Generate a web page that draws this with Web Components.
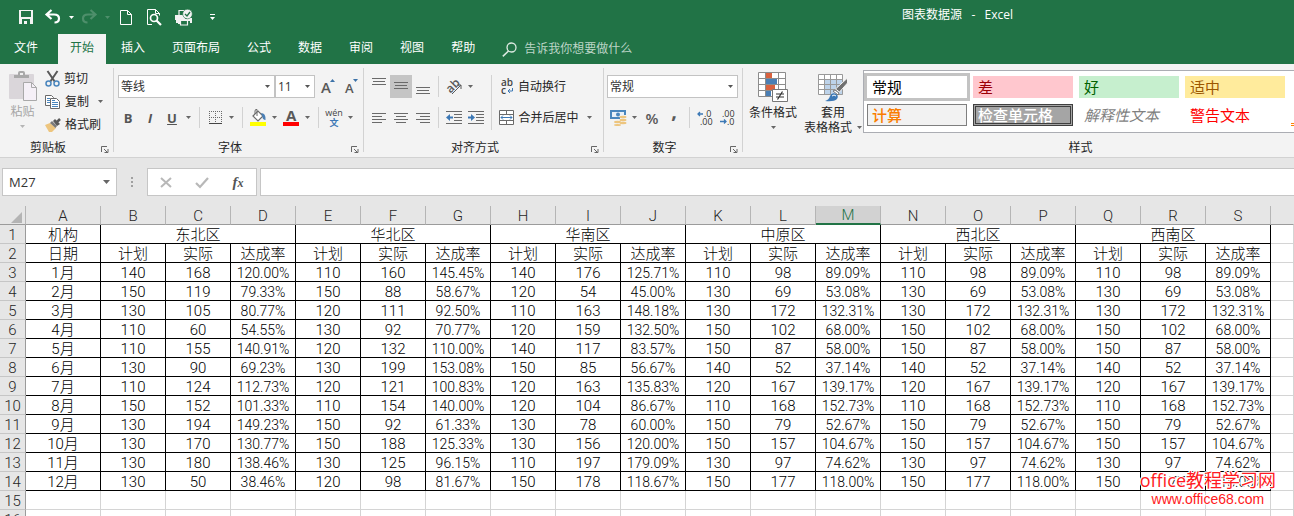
<!DOCTYPE html>
<html lang="zh-CN">
<head>
<meta charset="utf-8">
<title>图表数据源 - Excel</title>
<style>
  html, body { margin: 0; height: 100%; overflow: hidden; }
  body {
    font: 12px/16px "Open Sans", "Noto Sans CJK SC", sans-serif;
    color: #262626;
    background: #e6e6e6;
  }
</style>
</head>
<body>
<excel-window></excel-window>
<script>
const define = (tag, css, html, setup) => {
  const template = document.createElement('template');
  template.innerHTML = `<style>:host{display:block;box-sizing:border-box}*{box-sizing:border-box}button{font:inherit;color:inherit;background:none;border:0;padding:0;margin:0}${css}</style>${html}`;
  customElements.define(tag, class extends HTMLElement {
    connectedCallback() {
      if (this.shadowRoot) return;
      const root = this.attachShadow({ mode: 'open' });
      root.append(template.content.cloneNode(true));
      if (setup) setup(this, root);
    }
  });
};

/* Icon set: [width, height, markup] */
const lines = (list) => `<path d="${list.map(([x, y, w]) => `M${x} ${y}h${w}v1h-${w}z`).join('')}" fill="#6a6a6a" shape-rendering="crispEdges"/>`;
const ICONS = {
  caret: [5, 3, '<path d="M0 0h5L2.500 3z" fill="currentColor"/>'],
  customize: [5, 6, '<path d="M0 0h5v1H0zM0 3h5L2.500 6z" fill="#fff"/>'],
  save: [14, 14, '<path fill="#f3f3f3" fill-rule="evenodd" d="M0 0h14v14H0zM2 1v6h10v-6zM3 9v5h8V9z"/><path fill="#f3f3f3" d="M5 11h3v3h-3z"/>'],
  undo: [16, 14, '<path d="M6.500 0 1.500 4.500l5 4.500M2 4.500h7c3 0 5 1.500 5 4s-2 4-4.500 4" fill="none" stroke="#fff" stroke-width="2.200"/>'],
  redo: [16, 14, '<path d="M9.500 0l5 4.500-5 4.500M14 4.500H7C4 4.500 2 6 2 8.500s2 4 4.500 4" fill="none" stroke="#4e8f6b" stroke-width="2.200"/>'],
  newdoc: [12, 15, '<path d="M.5.5h7l4 4v10H.5zM7.500.5v4h4" fill="none" stroke="#fff"/>'],
  preview: [15, 16, '<path d="M5 15.500H.5V.5h8l4 4v2M8.500.5v4h4" fill="none" stroke="#fff"/><circle cx="7" cy="9" r="3.500" fill="none" stroke="#fff" stroke-width="1.700"/><path d="M9.500 11.500l4.500 4.500" stroke="#fff" stroke-width="2.200"/>'],
  print: [18, 17, '<path d="M1 8h2v2h9V9h5v5h-2v-2H5v3H3v-1H1z" fill="#f3f3f3"/><path d="M4 7.500v-6h6M5.500 11.500h7v4.500h-7z" fill="#217346" stroke="#f3f3f3" stroke-width="1.200"/><path d="M0 6h10v5H0z" fill="#f3f3f3"/><circle cx="12.500" cy="5" r="4.800" fill="#f3f3f3" stroke="#217346" stroke-width=".6"/><path d="M10 5l2 2 3-4" fill="none" stroke="#217346" stroke-width="1.300"/>'],
  search: [15, 15, '<circle cx="9.500" cy="5.500" r="4.500" fill="none" stroke="#dce9e1" stroke-width="1.300"/><path d="M6.500 9 .8 14.300" stroke="#dce9e1" stroke-width="1.600"/>'],
  paste: [28, 31, '<path d="M1 3h23q1 0 1 1v23q0 1-1 1H1q-1 0-1-1V4q0-1 1-1z" fill="#dad6da"/><path d="M5 7V4h4V2q0-2 2-2h3q2 0 2 2v2h4v3z" fill="#a9a9a9"/><path d="M11 2h3v2h-3z" fill="#f0f0f0"/><path d="M14.500 11.500h8l5 5v13h-13z" fill="#f5f0f7" stroke="#a9a9a9"/><path d="M22.500 11.500v5h5" fill="none" stroke="#a9a9a9"/>'],
  cut: [15, 16, '<path d="M2.500 0 10 11M12.500 0 5 11" stroke="#595959" stroke-width="2"/><circle cx="3.500" cy="12.500" r="2.500" fill="none" stroke="#4a86bd" stroke-width="1.500"/><circle cx="11.500" cy="12.500" r="2.500" fill="none" stroke="#4a86bd" stroke-width="1.500"/>'],
  copy: [16, 14, '<path d="M.5.5h6l2 2v8h-8z" fill="#fff" stroke="#6a6a6a"/><path d="M2 3.500h3M2 5.500h3M2 7.500h3" stroke="#4a86bd"/><path d="M5.500 3.500h6l3 3v7h-9z" fill="#fff" stroke="#6a6a6a"/><path d="M7 7.500h6M7 9.500h6M7 11.500h6M7 5.500h3" stroke="#4a86bd"/>'],
  brush: [16, 14, '<path d="M0 7 5 5l6 5-4 4H4z" fill="#edc57e"/><path d="m5 5 2-2 5 5-1.500 2z" fill="#7a7a7a"/><path d="m8 3 2-2 5 5-3 2z" fill="#595959"/><path d="m12 4 3-3" stroke="#595959" stroke-width="2.500"/>'],
  border: [13, 13, '<path d="M.5 0v12M6.500 0v12M12.500 0v12M0 .5h13M0 6.500h13" stroke="#6a6a6a" stroke-dasharray="1 1" fill="none" shape-rendering="crispEdges"/><path d="M0 12.500h13" stroke="#444"/>'],
  fill: [16, 17, '<path d="m3 7 5-5 5 5-5 5z" fill="#fff" stroke="#6a6a6a" stroke-width="1.200"/><path d="M5 5V2q0-2 2-1.500V7" fill="none" stroke="#6a6a6a"/><path d="M11 4q5 0 4.500 7-3-.5-3-3z" fill="#4a7fb5"/><path d="M0 13h16v4H0z" fill="#ff0"/>'],
  grow: [14, 18, '<text x="0" y="15" font-size="15" font-weight="600" fill="#595959">A</text><path d="M9 4 11.500 1 14 4z" fill="#3c72a8"/>'],
  shrink: [13, 18, '<text x="0" y="15" font-size="13" font-weight="600" fill="#595959">A</text><path d="M8 1h5l-2.500 3z" fill="#3c72a8"/>'],
  fontcolor: [16, 17, '<text x="3" y="12" font-size="15" font-weight="700" fill="#595959">A</text><path d="M0 13h16v4H0z" fill="#f00"/>'],
  pinyin: [18, 18, '<text x="9" y="7" text-anchor="middle" font-size="9" fill="#444">wén</text><text x="9" y="17" text-anchor="middle" font-size="9" font-weight="700" fill="#3c78b5">文</text>'],
  top: [14, 23, lines([[0,3,14],[1,6,12],[0,9,14]])],
  middle: [14, 23, lines([[0,7,14],[1,10,12],[0,13,14]])],
  bottom: [14, 23, lines([[0,12,14],[1,15,12],[0,18,14]])],
  left: [14, 10, lines([[0,0,14],[0,3,10],[0,6,14],[0,9,10]])],
  center: [14, 10, lines([[0,0,14],[2,3,10],[0,6,14],[2,9,10]])],
  right: [14, 10, lines([[0,0,14],[4,3,10],[0,6,14],[4,9,10]])],
  orient: [17, 16, '<text x="1" y="12" font-size="12" font-weight="600" fill="#595959" transform="rotate(-45 6 9)">ab</text><path d="M6 15 15 6M11 6h4v4" fill="none" stroke="#595959"/>'],
  outdent: [16, 13, lines([[0,0,16],[8,3,8],[8,6,8],[8,9,8],[0,12,16]]) + '<path d="M0 6.500 4 3v2.500h3v2H4V10z" fill="#3c78b5"/>'],
  indent: [16, 13, lines([[0,0,16],[8,3,8],[8,6,8],[8,9,8],[0,12,16]]) + '<path d="M7 6.500 3 3v2.500H0v2h3V10z" fill="#3c78b5"/>'],
  wrap: [13, 16, '<text x="0" y="7" font-size="10" font-weight="600" fill="#444">ab</text><text x="0" y="15" font-size="10" font-weight="600" fill="#444">c</text><path d="M11.500 9v3H7M9 10l-2 2 2 2" fill="none" stroke="#3c78b5"/>'],
  merge: [15, 15, '<path d="M.5.5h14v14H.5zM.5 4.500h14M.5 10.500h14M7.500.5v4M7.500 10.500v4" fill="#fff" stroke="#6a6a6a"/><path d="M2 7.500h11M4 5.500l-2 2 2 2M11 5.500l2 2-2 2" fill="none" stroke="#3c78b5"/>'],
  money: [17, 16, '<path d="M0 0h16v9H0z" fill="#4a86bd"/><path d="M2 2h12v5H2z" fill="#e8f0f8"/><circle cx="8" cy="4.500" r="2" fill="#4a86bd"/><path d="M10 5h6v10h-6zM4 10h6v6H4z" fill="#f3f3f3"/><g fill="#edc57e"><ellipse cx="13" cy="7" rx="3.500" ry="1.200"/><ellipse cx="13" cy="10" rx="3.500" ry="1.200"/><ellipse cx="13" cy="13" rx="3.500" ry="1.200"/><ellipse cx="7.500" cy="12" rx="3.500" ry="1.200"/><ellipse cx="7.500" cy="15" rx="3.500" ry="1"/></g>'],
  incdec: [16, 16, '<text x="7" y="7" font-size="9" fill="#333">.0</text><text x="3" y="15" font-size="9" fill="#333">.00</text><path d="M6 4H1M3 2 1 4l2 2" fill="none" stroke="#3c78b5" stroke-width="1.300"/>'],
  decdec: [16, 16, '<text x="3" y="7" font-size="9" fill="#333">.00</text><text x="8" y="15" font-size="9" fill="#333">.0</text><path d="M1 11.500h6M5 9.500l2 2-2 2" fill="none" stroke="#3c78b5" stroke-width="1.300"/>'],
  launcher: [8, 7, '<path d="M.5 6V.5H6M3 3l3 3M7 3v3.500H3.500" fill="none" stroke="#666"/>'],
  condition: [31, 30, '<path d="M.5.5h27v24H.5z" fill="#fff"/><path d="M8 1h6v5H8zM8 13h9v5H8z" fill="#d9623f"/><path d="M8 7h11v5H8zM8 19h5v5H8z" fill="#4a7fb5"/><path d="M.5.5h27v24H.5zM.5 6.500h27M.5 12.500h27M.5 18.500h27M7.500.5v24M20.500.5v24" fill="none" stroke="#8c8c8c"/><path d="M14.500 17.500h15v12h-15z" fill="#fff" stroke="#777"/><path d="M18 22h8M18 25h8M24.500 19.500l-5 8" fill="none" stroke="#333" stroke-width="1.200"/>'],
  tableformat: [30, 30, '<g transform="translate(0 2)"><path d="M.5.5h24v20H.5z" fill="#fff"/><path d="M7 6h18v15H7z" fill="#bdd3ea"/><path d="M.5.5h24v20H.5zM.5 5.500h24M.5 10.500h24M.5 15.500h24M6.500.5v20M12.500.5v20M18.500.5v20" fill="none" stroke="#999"/><path d="M29.500 4v5l-8 9-4-3z" fill="#707070" stroke="#f3f3f3"/><path d="m17 16 4 3-1 2-5-4z" fill="#fff" stroke="#777"/><path d="M7 27q4-1 5-5 2-4 6-2 3 2 1 5-3 3-12 2z" fill="#3c78b5"/><path d="M14 22q2-2 4 0" fill="none" stroke="#fff"/></g>'],
  cancel: [12, 11, '<path d="M1 1l10 9M11 1 1 10" stroke="#b8b8b8" stroke-width="2"/>'],
  accept: [14, 11, '<path d="M1 6l4 4 8-9" fill="none" stroke="#b8b8b8" stroke-width="2.200"/>'],
  dots: [2, 10, '<path d="M0 0h2v2H0zM0 4h2v2H0zM0 8h2v2H0z" fill="#a0a0a0"/>'],
  corner: [11, 11, '<path d="M11 0v11H0z" fill="#b4b4b4"/>']
};

define('ui-icon', `:host{display:block;flex:none}svg{display:block;overflow:visible}`, '', (host, root) => {
  const [w, h, body] = ICONS[host.getAttribute('name')];
  root.innerHTML += `<svg width="${w}" height="${h}" viewBox="0 0 ${w} ${h}" aria-hidden="true">${body}</svg>`;
});

/* A small ribbon button, with an optional drop-down caret */
define('tool-button', `
  :host{display:flex;flex:none;height:var(--h,23px)}
  button{display:flex;align-items:center;justify-content:center;height:100%}
  .main{min-width:var(--w,22px);gap:4px;white-space:nowrap}
  .drop{width:var(--drop,11px);color:#666}
  :host(:not([caret])) .drop{display:none}
  :host([pressed]) .main{background:#c5c5c5}
  :host([dim]) .drop{color:#4e8f6b}
  :host([light]) .drop{color:#fff}`,
  `<button class="main"><slot></slot></button><button class="drop" aria-label="更多选项"><ui-icon name="caret"></ui-icon></button>`,
  (host, root) => {
    const main = root.querySelector('.main');
    if (host.hasAttribute('label')) main.setAttribute('aria-label', host.getAttribute('label'));
    if (host.hasAttribute('icon')) {
      const icon = document.createElement('ui-icon');
      icon.setAttribute('name', host.getAttribute('icon'));
      main.prepend(icon);
    }
  });

define('large-button', `
  button{display:flex;flex-direction:column;align-items:center;width:100%}
  .art{height:33px;display:flex;align-items:flex-start;justify-content:center}
  .text{line-height:15px;white-space:nowrap}
  .more{height:14px;display:flex;align-items:center;color:#666}
  :host([disabled]) button{color:#a6a6a6}:host([disabled]) .more{color:#b5b5b5}
  .two{display:flex;align-items:center;gap:5px;line-height:15px;white-space:nowrap;color:#666}
  .two b{font-weight:400;color:#262626}`,
  `<button><span class="art"></span><span class="text"><slot></slot></span><span class="more"><ui-icon name="caret"></ui-icon></span></button>`,
  (host, root) => {
    root.querySelector('.art').innerHTML = `<ui-icon name="${host.getAttribute('icon')}"></ui-icon>`;
    if (host.hasAttribute('second')) {
      const more = root.querySelector('.more');
      more.className = 'two';
      more.insertAdjacentHTML('afterbegin', `<b>${host.getAttribute('second')}</b>`);
    }
  });

define('combo-box', `
  :host{position:relative;height:23px;flex:none}
  select{appearance:none;width:100%;height:100%;border:1px solid #c3c3c3;border-radius:0;background:#fff;font:inherit;color:#333;padding:0 2px;margin:0;display:block}
  ui-icon{position:absolute;right:5px;top:10px;color:#555;pointer-events:none}`,
  `<select></select><ui-icon name="caret"></ui-icon>`,
  (host, root) => {
    const select = root.querySelector('select');
    select.add(new Option(host.getAttribute('value')));
    select.setAttribute('aria-label', host.getAttribute('label'));
  });

define('ribbon-group', `
  :host{display:flex;flex-direction:column;flex:none;position:relative}
  :host::after{content:"";position:absolute;right:0;top:4px;bottom:5px;width:1px;background:#d2d2d2}
  :host([open])::after{display:none}
  .body{flex:1;min-height:0}
  footer{display:flex;height:18px;line-height:18px;flex:none}
  .name{flex:1;text-align:center;padding-left:var(--label-shift,0)}
  button{width:18px;display:flex;align-items:center;justify-content:center;padding-top:2px}
  :host([open]) button{display:none}`,
  `<div class="body"><slot></slot></div><footer><span class="name"></span><button aria-label="对话框启动器"><ui-icon name="launcher"></ui-icon></button></footer>`,
  (host, root) => { root.querySelector('.name').textContent = host.getAttribute('name'); });

define('title-bar', `
  :host{display:flex;align-items:center;height:34px;background:#217346;color:#fff}
  nav{display:flex;padding-left:11px;width:48%;flex:none}
  h1{flex:1;text-align:center;font:inherit;margin:0;white-space:pre;padding-bottom:4px}`,
  `<nav aria-label="快速访问工具栏">
    <tool-button icon="save" label="保存" style="--w:30px"></tool-button>
    <tool-button icon="undo" label="撤消" caret light style="--w:24px;--drop:12px"></tool-button>
    <tool-button icon="redo" label="恢复" caret dim style="--w:24px;--drop:12px"></tool-button>
    <tool-button icon="newdoc" label="新建" style="--w:26px"></tool-button>
    <tool-button icon="preview" label="打印预览" style="--w:30px"></tool-button>
    <tool-button icon="print" label="快速打印" style="--w:30px"></tool-button>
    <tool-button icon="customize" label="自定义" style="--w:26px"></tool-button>
  </nav><h1>图表数据源   -   Excel</h1>`);

define('ribbon-tabs', `
  :host{display:flex;height:30px;background:#217346;color:#fff;padding-left:2px;gap:3px}
  button{padding:0 12px 2px;flex:none}
  .file{margin-right:5px}
  .on{background:#f3f3f3;color:#217346}
  .tell{display:flex;align-items:center;gap:7px;color:#bcd5c7;margin-left:12px;padding:0}`,
  `<button class="file">文件</button><button class="on">开始</button><button>插入</button><button>页面布局</button><button>公式</button><button>数据</button><button>审阅</button><button>视图</button><button>帮助</button><button class="tell"><ui-icon name="search"></ui-icon>告诉我你想要做什么</button>`);

define('style-gallery', `
  :host{flex:1;min-width:0;height:63px;overflow:hidden;background:#fff;border:1px solid #abadb3;border-right:0;padding:5px 0 5px 3px}
  .grid{display:grid;grid-template-columns:repeat(5,100px);grid-auto-rows:22px;gap:6px}
  button{text-align:left;padding-left:5px;font-size:15px;line-height:20px;white-space:nowrap;overflow:hidden}
  .normal{color:#000;outline:3px solid #c3c3c3}
  .bad{background:#ffc7ce;color:#9c0006}.good{background:#c6efce;color:#006100}.neutral{background:#ffeb9c;color:#9c5700}
  .calc{border:1px solid #7f7f7f;background:#f2f2f2;color:#fa7d00;padding-left:4px;font-weight:500}
  .check{border:3px double #3f3f3f;background:#a5a5a5;color:#fff;padding-left:2px;font-weight:500;line-height:16px}
  .note{color:#7f7f7f;font-style:italic}.warn{color:#f00}
  .link{border-bottom:3px double #ff8001}`,
  `<div class="grid"><button class="normal">常规</button><button class="bad">差</button><button class="good">好</button><button class="neutral">适中</button><span></span>
  <button class="calc">计算</button><button class="check">检查单元格</button><button class="note">解释性文本</button><button class="warn">警告文本</button><button class="link" aria-label="链接单元格"></button></div>`);

define('home-ribbon', `
  :host{display:flex;height:94px;background:#f3f3f3;border-bottom:1px solid #d2d2d2;overflow:hidden}
  .row{display:flex;align-items:center;height:23px}
  .rows{display:flex;flex-direction:column;gap:8px}
  .pad{padding-top:11px}
  .sep{width:1px;height:21px;background:#d2d2d2;margin:0 4px 0 5px;flex:none}
  .tight{margin-left:4px}
  .clip{display:flex;padding-top:3px}
  .clip large-button{width:45px;padding-top:4px}
  .char{font-size:13px;font-weight:700;color:#555}
  .percent{font-size:15px;font-weight:600;color:#595959}
  .comma{font-size:20px;line-height:20px;font-weight:700;color:#595959;padding-bottom:14px}
  .font{width:250px}.font .row{padding-left:3px}.font .row.boxes{padding-left:4px}
  .align{width:240px}.number{width:139px}
  .cols{display:flex;padding-left:4px}
  .number .cols{padding-left:3px}
  .tall{width:1px;height:55px;background:#d2d2d2;margin:0 4px 0 4px;flex:none}
  .styles{flex:1;min-width:0;--label-shift:124px}
  .stylebody{display:flex;padding-top:6px}
  .stylebody large-button{flex:none;padding-top:2px;width:60px}`,
  `<ribbon-group name="剪贴板" style="width:114px"><div class="clip">
      <large-button icon="paste" disabled>粘贴</large-button>
      <div><tool-button icon="cut">剪切</tool-button><tool-button icon="copy" caret style="--drop:22px">复制</tool-button><tool-button icon="brush">格式刷</tool-button></div>
    </div></ribbon-group>
  <ribbon-group name="字体" class="font"><div class="rows pad">
      <div class="row boxes"><combo-box value="等线" label="字体" style="width:157px"></combo-box><combo-box value="11" label="字号" style="width:40px"></combo-box><tool-button icon="grow" label="增大字号" style="--w:26px"></tool-button><tool-button icon="shrink" label="减小字号" style="--w:20px"></tool-button></div>
      <div class="row"><tool-button label="加粗"><b class="char">B</b></tool-button><tool-button label="倾斜"><i class="char">I</i></tool-button><tool-button label="下划线" caret><u class="char">U</u></tool-button><span class="sep"></span><tool-button icon="border" label="边框" caret></tool-button><span class="sep"></span><tool-button icon="fill" label="填充颜色" caret></tool-button><tool-button icon="fontcolor" label="字体颜色" caret></tool-button><span class="sep"></span><tool-button icon="pinyin" label="拼音" caret></tool-button></div>
    </div></ribbon-group>
  <ribbon-group name="对齐方式" class="align"><div class="cols pad">
      <div class="rows">
        <div class="row"><tool-button icon="top" label="顶端对齐"></tool-button><tool-button icon="middle" label="垂直居中" pressed></tool-button><tool-button icon="bottom" label="底端对齐"></tool-button><span class="sep tight"></span><tool-button icon="orient" label="方向" caret></tool-button></div>
        <div class="row"><tool-button icon="left" label="左对齐"></tool-button><tool-button icon="center" label="居中"></tool-button><tool-button icon="right" label="右对齐"></tool-button><span class="sep tight"></span><tool-button icon="outdent" label="减少缩进量"></tool-button><tool-button icon="indent" label="增加缩进量"></tool-button></div>
      </div><span class="tall"></span>
      <div class="rows"><div class="row"><tool-button icon="wrap" style="--w:75px">自动换行</tool-button></div><div class="row"><tool-button icon="merge" caret style="--w:86px;--drop:14px">合并后居中</tool-button></div></div>
    </div></ribbon-group>
  <ribbon-group name="数字" class="number"><div class="cols pad"><div class="rows">
      <div class="row"><combo-box value="常规" label="数字格式" style="width:131px"></combo-box></div>
      <div class="row"><tool-button icon="money" label="会计数字格式" caret></tool-button><tool-button label="百分比样式" style="--w:24px"><span class="percent">%</span></tool-button><tool-button label="千位分隔样式" style="--w:20px"><b class="comma">,</b></tool-button><span class="sep"></span><tool-button icon="incdec" label="增加小数位数"></tool-button><tool-button icon="decdec" label="减少小数位数"></tool-button></div>
    </div></div></ribbon-group>
  <ribbon-group name="样式" class="styles" open><div class="stylebody">
      <large-button icon="condition">条件格式</large-button>
      <large-button icon="tableformat" second="表格格式">套用</large-button>
      <style-gallery></style-gallery>
    </div></ribbon-group>`);

define('formula-bar', `
  :host{display:flex;align-items:center;height:48px;padding:0 0 0 2px}
  .box{height:28px;border:1px solid #c6c6c6;background:#fff;display:flex;align-items:center;flex:none}
  input{font:inherit;font-size:13px;border:0;padding:0 0 0 6px;margin:0;background:none;color:#333;min-width:0;flex:1;height:100%;outline:0}
  .name{width:115px}.name button{width:20px;color:#666}
  .name button{display:flex;justify-content:center}
  .dots{width:30px;display:flex;justify-content:center}
  .actions{width:110px;margin-right:3px;justify-content:space-around}
  .actions button{width:35px;display:flex;justify-content:center}
  .fx{font:italic 700 15px/20px "Liberation Serif",serif;color:#555}
  .fx small{font-size:12px}
  .text{flex:1;border-right:0}`,
  `<div class="box name"><input aria-label="名称框" value="M27"><button aria-label="名称列表"><svg width="7" height="4"><path d="M0 0h7L3.500 4z" fill="#666"/></svg></button></div>
   <span class="dots"><ui-icon name="dots"></ui-icon></span>
   <div class="box actions"><button aria-label="取消"><ui-icon name="cancel"></ui-icon></button><button aria-label="输入"><ui-icon name="accept"></ui-icon></button><button aria-label="插入函数"><span class="fx">f<small>x</small></span></button></div>
   <div class="box text"><input aria-label="编辑栏"></div>`);

const EAST = [[140,168],[150,119],[130,105],[110,60],[110,155],[130,90],[110,124],[150,152],[130,194],[130,170],[130,180],[130,50]];
const NORTH = [[110,160],[150,88],[120,111],[130,92],[120,132],[130,199],[120,121],[110,154],[150,92],[150,188],[130,125],[120,98]];
const SOUTH = [[140,176],[120,54],[110,163],[120,159],[140,117],[150,85],[120,163],[120,104],[130,78],[130,156],[110,197],[150,178]];
const CENTRAL = [[110,98],[130,69],[130,172],[150,102],[150,87],[140,52],[120,167],[110,168],[150,79],[150,157],[130,97],[150,177]];
const REGIONS = [['东北区', EAST], ['华北区', NORTH], ['华南区', SOUTH], ['中原区', CENTRAL], ['西北区', CENTRAL], ['西南区', CENTRAL]];

define('sheet-grid', `
  :host{overflow:hidden;flex:1;min-height:0}
  table{table-layout:fixed;border-collapse:separate;border-spacing:0;width:100%;min-width:1294px;background:#fff;
    font:15px/16px Roboto,"Noto Sans CJK SC",sans-serif;color:#000}
  .n{width:26px}.a{width:75px}.v{width:65px}
  th,td{padding:2px 0 0;height:19px;font-weight:300;text-align:center;white-space:nowrap;overflow:hidden;border:0 solid #d4d4d4;border-width:0 1px 1px 0}
  th{background:#e6e6e6;font-weight:300;color:#262626;border-color:#9b9b9b}
  thead th{border-right:1px solid #b5b5b5;border-bottom-color:#9b9b9b}
  thead th:last-child{border-right-color:#e6e6e6}
  tbody th{border-bottom-color:#c6c6c6}
  thead th.sel{background:#d2d2d2;color:#217346;border-bottom:2px solid #217346;line-height:15px}
  td.f{border-color:#000}
  .all ui-icon{margin:2px 0 0 11px}
  .pct{font-size:14px}`,
  `<table><colgroup></colgroup><thead></thead><tbody></tbody></table>`,
  (host, root) => {
    root.querySelector('colgroup').innerHTML = '<col class="n"><col class="a">' + '<col class="v">'.repeat(18) + '<col>';
    root.querySelector('thead').innerHTML = '<tr><th class="all"><ui-icon name="corner"></ui-icon></th>' +
      [...'ABCDEFGHIJKLMNOPQRS'].map(c => `<th scope="col"${c === 'M' ? ' class="sel"' : ''}>${c}</th>`).join('') + '<th></th></tr>';
    const cell = (v, extra = '') => `<td class="f"${extra}>${v}</td>`;
    const row = (n, cells) => `<tr><th scope="row">${n}</th>${cells}<td></td></tr>`;
    let html = row(1, cell('机构') + REGIONS.map(([name]) => cell(name, ' colspan="3"')).join(''));
    html += row(2, cell('日期') + REGIONS.map(() => cell('计划') + cell('实际') + cell('达成率')).join(''));
    for (let m = 0; m < 12; m++) {
      html += row(m + 3, cell(`${m + 1}月`) + REGIONS.map(([, data]) => {
        const [plan, real] = data[m];
        return cell(plan) + cell(real) + `<td class="f pct">${(real / plan * 100).toFixed(2)}%</td>`;
      }).join(''));
    }
    for (const n of [15, 16]) html += row(n, '<td></td>'.repeat(19));
    root.querySelector('tbody').innerHTML = html;
  });

define('site-mark', `
  :host{position:absolute;right:18px;bottom:8px;text-align:center;color:#ff1a22;white-space:nowrap;
    text-shadow:1px 0 #fff,-1px 0 #fff,0 1px #fff,0 -1px #fff,1px 1px #fff,-1px -1px #fff}
  strong{display:block;font-weight:400;font-size:18px;line-height:20px}
  a{display:block;color:inherit;text-decoration:none;font:14px/18px "Liberation Sans",sans-serif}`,
  `<strong>office教程学习网</strong><a href="#">www.office68.com</a>`);

define('excel-window', `:host{display:flex;flex-direction:column;height:100vh;position:relative;overflow:hidden}:host>*{flex:none}sheet-grid{flex:1}`,
  `<title-bar></title-bar><ribbon-tabs></ribbon-tabs><home-ribbon></home-ribbon><formula-bar></formula-bar><sheet-grid></sheet-grid><site-mark></site-mark>`);
</script>
</body>
</html>
